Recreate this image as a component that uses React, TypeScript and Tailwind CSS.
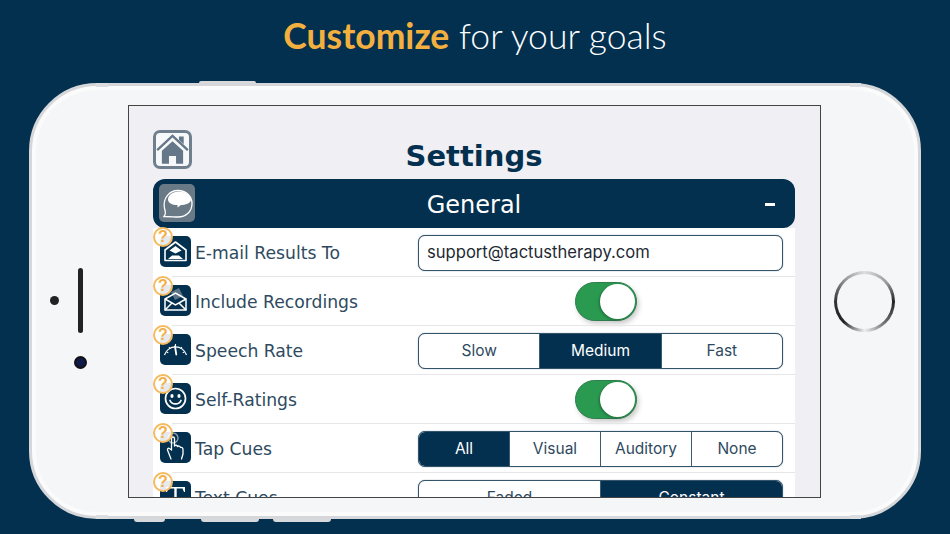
import React from 'react';

const Badge = () => (
    <div className="absolute left-0 top-[-1px] w-[20px] h-[20px] rounded-full bg-white/90 border-2 border-[#f5b95e] flex items-center justify-center text-[16px] font-bold text-[#f3b04a] font-['Liberation_Sans',sans-serif] leading-none">?</div>
);

const MailOpenIcon = () => (
    <svg viewBox="0 0 31 31" className="w-full h-full">
        <path d="M5 14 L15.5 6 L26 14 V24.5 H5 Z" fill="none" stroke="#fff" strokeWidth="1.6" strokeLinejoin="round" />
        <path d="M9.5 14.5 L15.5 10 L21.5 14.5 L15.5 17.5 Z" fill="#fff" />
        <path d="M8 23 L12 19.5 H19 L23 23 Z" fill="#fff" />
    </svg>
);

const MailNoteIcon = () => (
    <svg viewBox="0 0 31 31" className="w-full h-full">
        <path d="M11 7 L19 3 L23 11 L15 15 Z" fill="#5b7487" />
        <path d="M5 14 L15.5 8 L26 14 V25 H5 Z" fill="none" stroke="#fff" strokeWidth="1.5" />
        <path d="M5 14 L15.5 20 L26 14" fill="none" stroke="#fff" strokeWidth="1.5" />
        <path d="M5 25 L12 18 M26 25 L19 18" stroke="#fff" strokeWidth="1.5" />
    </svg>
);

const GaugeIcon = () => (
    <svg viewBox="0 0 31 31" className="w-full h-full" fill="none" stroke="#fff">
        <path d="M4.5 21 A11.5 11.5 0 0 1 26.5 21" strokeWidth="1.2" />
        <path d="M15.5 10 V12 M9 13 L10.3 14.5 M22 13 L20.7 14.5 M6.5 18 L8.3 18.7 M24.5 18 L22.7 18.7" strokeWidth="1.1" />
        <path d="M15 12.5 L16.3 20.5" strokeWidth="1.8" strokeLinecap="round" />
    </svg>
);

const SmileIcon = () => (
    <svg viewBox="0 0 31 31" className="w-full h-full" fill="none" stroke="#fff">
        <circle cx="15.5" cy="15.5" r="10" strokeWidth="1.7" />
        <ellipse cx="12" cy="13" rx="1.6" ry="2" fill="#fff" stroke="none" />
        <ellipse cx="19" cy="13" rx="1.6" ry="2" fill="#fff" stroke="none" />
        <path d="M10 17.5 C12 22 19 22 21 17.5" strokeWidth="1.7" strokeLinecap="round" />
    </svg>
);

const HandIcon = () => (
    <svg viewBox="0 0 31 31" className="w-full h-full" fill="none" stroke="#fff" strokeWidth="1.3" strokeLinejoin="round" strokeLinecap="round">
        <circle cx="13" cy="6" r="5" strokeWidth="1.4" opacity="0.55" />
        <path d="M11.5 18 V6.5 C11.5 4.5 14.5 4.5 14.5 6.5 V14 M14.5 14 C15.5 12.8 17 13 17.5 14.5 M17.5 14.5 C18.5 13.6 20 14 20.5 15.5 C22 15 23 16 23 17.5 V22 L21.5 27 M11.5 18 L9.5 16.5 C8 15.8 7 17 7.7 18.5 L11 27" />
    </svg>
);

const TextIcon = () => (
    <svg viewBox="0 0 31 31" className="w-full h-full">
        <path d="M6 6 H25 V11 H24 L22.5 7.5 H16.7 V24 L19.5 25 V26 H11.5 V25 L14.3 24 V7.5 H8.5 L7 11 H6 Z" fill="#fff" />
    </svg>
);

const HomeIcon = () => (
    <svg viewBox="2 3 28 26" className="w-full h-full">
        <path d="M3 16.5 L16 4.5 L29 16.5" fill="none" stroke="#64788a" strokeWidth="2" />
        <path d="M21.5 5 H25.5 V11.5 L21.5 8 Z" fill="#64788a" />
        <path d="M7 17 L16 9 L25 17 V28 H19 V21.5 H13 V28 H7 Z" fill="#64788a" />
    </svg>
);

const HeadBubbleIcon = () => (
    <svg viewBox="0 0 36 36" className="w-full h-full" fill="none">
        <path d="M19 5.5 C27 5.5 33 11 33 18.5 C33 26.5 27 32 19 32 C15 32 12 31.5 5 31.5 C7.5 28.5 6.5 26.5 5.5 23.5 C3.5 13 10.5 5.5 19 5.5 Z" stroke="#fff" strokeWidth="1.3" />
        <path d="M20 6.5 C27 6.5 32 11 32 14.5 C32 18.5 26 20 22 20 L18.5 22.5 L18.5 20 C13 20 9 18 9 14.5 C9 10.5 13.5 6.5 20 6.5 Z" fill="#fff" />
    </svg>
);

const Toggle = () => (
    <div className="ml-[10px] w-[62px] h-[39px] rounded-full bg-[#2b9a51] border border-[#2f7d4f] flex items-center justify-end pr-[1px] shadow-[2px_3px_5px_rgba(0,0,0,0.2)]">
        <div className="w-[35px] h-[35px] rounded-full bg-white shadow-[-1px_1px_3px_rgba(0,0,0,0.3)]"></div>
    </div>
);

const Segmented = ({ items, active }: { items: string[]; active: string }) => (
    <div className="w-[365px] h-[36px] flex rounded-[7px] border border-[#34546c] shadow-[0_0_1px_#3b5a73] overflow-hidden bg-white">
        {items.map((item, i) => (
            <div
                key={item}
                className={`flex-1 flex items-center justify-center text-[15.5px] font-['Inter',sans-serif] ${i > 0 ? 'border-l border-[#3b5a73]' : ''} ${item === active ? 'bg-[#03304f] text-white' : 'text-[#2e4a60]'}`}
            >
                {item}
            </div>
        ))}
    </div>
);

const Row = ({ icon, label, children }: { icon: React.ReactNode; label: string; children: React.ReactNode }) => (
    <div className="relative h-[49px] shrink-0 flex items-center">
        <Badge />
        <div className="absolute left-[19px] right-0 bottom-0 h-px bg-[#e6e6e8]"></div>
        <div className="w-[31px] h-[31px] ml-[7px] -mt-[2px] rounded-[5px] bg-[#03304f] shrink-0">{icon}</div>
        <div className="w-[223px] pl-[4px] pt-[2px] text-[17.2px] text-[#2e4a60] font-['DejaVu_Sans',sans-serif] whitespace-nowrap">{label}</div>
        <div className="w-[365px] ml-[4px] flex justify-center">{children}</div>
    </div>
);

export default function App() {
    return (
        <div className="w-[950px] h-[534px] bg-[#03304f] overflow-hidden flex flex-col items-center">
            <div className="h-[83px] w-full shrink-0 pt-[14px] text-center text-[35.5px] leading-[44px] text-white font-['Lato',sans-serif] font-light">
                <span className="font-bold text-[#f3b03f]">Customize</span> for your goals
            </div>

            <div className="relative w-[892px] h-[436px] shrink-0 rounded-[68px] bg-[#f5f6f8] border-[3px] border-[#d6d7da] shadow-[inset_0_0_0_4px_#fbfbfc] flex">
                {/* side buttons */}
                <div className="absolute left-[167px] top-[-5px] w-[57px] h-[2px] rounded-t bg-[#d8d9db]"></div>
                <div className="absolute left-[102px] bottom-[-6px] w-[31px] h-[3px] rounded-b bg-[#d8d9db]"></div>
                <div className="absolute left-[169px] bottom-[-6px] w-[58px] h-[3px] rounded-b bg-[#d8d9db]"></div>
                <div className="absolute left-[241px] bottom-[-6px] w-[58px] h-[3px] rounded-b bg-[#d8d9db]"></div>
                {/* antenna bands */}
                <div className="absolute left-[64px] top-[-3px] w-[12px] h-[4px] bg-[#dcdde0]"></div>
                <div className="absolute left-[818px] top-[-3px] w-[11px] h-[4px] bg-[#dcdde0]"></div>
                <div className="absolute left-[64px] bottom-[-3px] w-[12px] h-[4px] bg-[#dcdde0]"></div>
                <div className="absolute left-[818px] bottom-[-3px] w-[11px] h-[4px] bg-[#dcdde0]"></div>

                <div className="w-[96px] shrink-0 relative">
                    <div className="absolute left-[18px] top-[210px] w-[9px] h-[9px] rounded-full bg-[#222]"></div>
                    <div className="absolute left-[46px] top-[182px] w-[5px] h-[65px] rounded-full bg-[#222]"></div>
                    <div className="absolute left-[42px] top-[270px] w-[13px] h-[13px] rounded-full bg-[#101a4a] border-2 border-[#111]"></div>
                </div>

                <div className="w-[693px] h-[393px] mt-[19px] shrink-0 border border-[#444] bg-[#efeff4] overflow-hidden pl-[24px] pr-[25px] flex flex-col">
                    <div className="relative h-[73px] shrink-0 flex items-end justify-center pb-[3px] text-[29px] leading-[40px] font-bold text-[#03304f] font-['DejaVu_Sans',sans-serif]">
                        <div className="absolute left-0 top-[24px] w-[39px] h-[39px] rounded-[7px] border-[3px] border-[#6f7f8d] bg-[#f7f8f9]">
                            <HomeIcon />
                        </div>
                        Settings
                    </div>

                    <div className="relative h-[49px] shrink-0 rounded-[12px] bg-[#03304f] flex items-center justify-center pt-[2px] text-[24px] text-white font-['DejaVu_Sans',sans-serif]">
                        <div className="absolute left-[6px] top-[5px] w-[36px] h-[38px] rounded-[5px] bg-[#6a7986]">
                            <HeadBubbleIcon />
                        </div>
                        General
                        <div className="absolute right-[20px] top-[24px] w-[10px] h-[3px] bg-white"></div>
                    </div>

                    <div className="flex flex-col bg-white shrink-0">
                        <Row icon={<MailOpenIcon />} label="E-mail Results To">
                            <div className="w-[365px] h-[36px] rounded-[7px] border border-[#34546c] shadow-[0_0_1px_#3b5a73] bg-white pl-[8px] flex items-center text-[16.6px] text-[#1f2a33] font-['Inter',sans-serif]">
                                support@tactustherapy.com
                            </div>
                        </Row>
                        <Row icon={<MailNoteIcon />} label="Include Recordings">
                            <Toggle />
                        </Row>
                        <Row icon={<GaugeIcon />} label="Speech Rate">
                            <Segmented items={['Slow', 'Medium', 'Fast']} active="Medium" />
                        </Row>
                        <Row icon={<SmileIcon />} label="Self-Ratings">
                            <Toggle />
                        </Row>
                        <Row icon={<HandIcon />} label="Tap Cues">
                            <Segmented items={['All', 'Visual', 'Auditory', 'None']} active="All" />
                        </Row>
                        <Row icon={<TextIcon />} label="Text Cues">
                            <Segmented items={['Faded', 'Constant']} active="Constant" />
                        </Row>
                    </div>
                </div>

                <div className="flex-1 relative">
                    <div className="absolute left-[13px] top-[185px] w-[61px] h-[61px] rounded-full bg-[conic-gradient(#ddd_0deg,#999_50deg,#222_90deg,#777_140deg,#eee_180deg,#222_225deg,#333_270deg,#999_320deg,#ddd_360deg)] flex items-center justify-center">
                        <div className="w-[55px] h-[55px] rounded-full bg-[#f5f6f8]"></div>
                    </div>
                </div>
            </div>
        </div>
    );
}
